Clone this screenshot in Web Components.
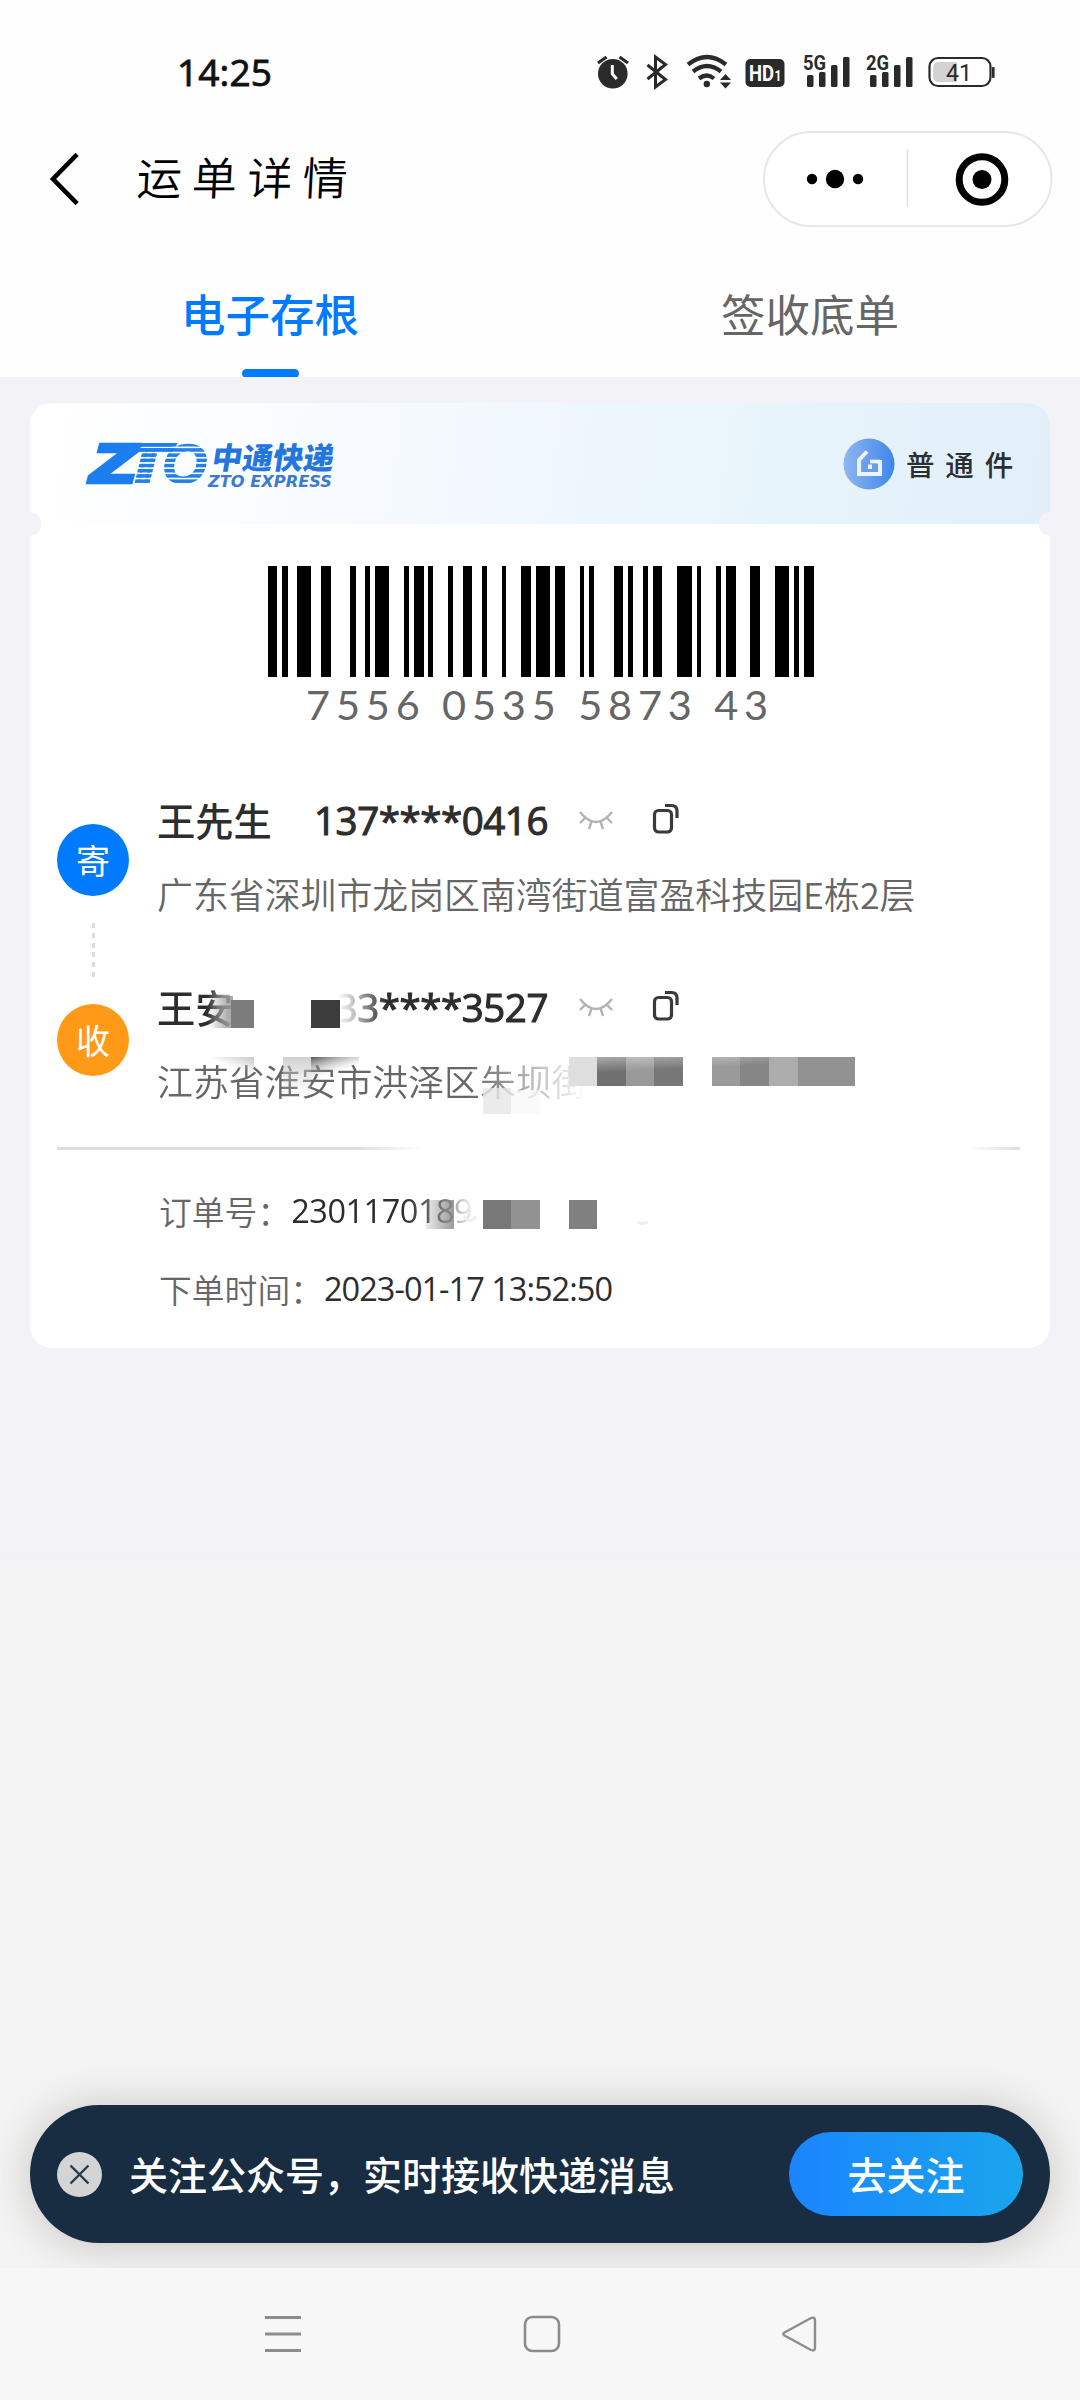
<!DOCTYPE html>
<html lang="zh-CN">
<head>
<meta charset="utf-8">
<title>运单详情</title>
<style>
html,body{margin:0;padding:0}
body{width:1080px;height:2400px;overflow:hidden;font-family:"Noto Sans CJK SC",sans-serif;background:#f3f3f3}
</style>
</head>
<body>
<waybill-page></waybill-page>
<script>
const define=(name,html,init)=>customElements.define(name,class extends HTMLElement{
  connectedCallback(){
    if(this.shadowRoot)return;
    const t=document.createElement('template');
    t.innerHTML=html;
    this.attachShadow({mode:'open'}).appendChild(t.content.cloneNode(true));
    if(init)init(this,this.shadowRoot);
  }
});

/* A single line of text whose letter spacing is tuned to a given width. */
define('fit-text',`<style>:host{display:block;white-space:nowrap;flex:none}span{display:inline-block;white-space:pre}</style><span></span>`,(el,root)=>{
  const s=root.querySelector('span');
  s.textContent=el.getAttribute('text');
  const w=+el.getAttribute('w');
  if(w){
    s.style.letterSpacing=(w-s.getBoundingClientRect().width)/s.textContent.length+'px';
    el.style.width=w+'px';
  }
});

define('status-bar',`<style>
:host{display:flex;height:116px;box-sizing:border-box;padding:48px 0 0 177px;align-items:flex-start}
fit-text{font:400 37px/48px "Open Sans","Noto Sans",sans-serif;color:#111;width:96px;-webkit-text-stroke:.9px #111}
svg{margin-left:317px;display:block}
</style>
<fit-text text="14:25" w="95"></fit-text>
<svg width="420" height="50" viewBox="590 48 420 50" fill="#2a2a2a">
 <circle cx="613.8" cy="73.7" r="14.8"/><path d="M599 63l8.5-6M620.500 57l8.500 6" stroke="#2a2a2a" stroke-width="3.200" fill="none"/>
 <path d="M613.300 65v9l4.500 5" stroke="#fff" stroke-width="3" fill="none"/>
 <path d="M648.500 65l18 14.500-10 7.500V57l10 7.500-18 14.500" fill="none" stroke="#2a2a2a" stroke-width="3"/>
 <g fill="none" stroke="#2a2a2a" stroke-width="4.200"><path d="M689 64.500q19-15 38 0"/><path d="M694 71.500q14-11 28 0"/><path d="M700 78.500q8-6 15 0"/></g>
 <circle cx="707.800" cy="84" r="3.200"/><path d="M721 80l5.500-6 5.500 6zM721 82.500l5.500 6 5.500-6z"/>
 <rect x="746.500" y="59" width="39" height="28" rx="5"/>
 <text x="750" y="81" font-family="Roboto" font-weight="700" font-size="22" textLength="25" lengthAdjust="spacingAndGlyphs" fill="#fff">HD</text>
 <text x="775.500" y="81" font-family="Roboto" font-weight="700" font-size="14" textLength="7" lengthAdjust="spacingAndGlyphs" fill="#fff">1</text>
 <text x="804" y="70" font-family="Roboto" font-weight="700" font-size="20" textLength="23" lengthAdjust="spacingAndGlyphs">5G</text>
 <rect x="808" y="75" width="6.500" height="12" rx="1.500"/><rect x="820" y="72" width="6.500" height="15" rx="1.500"/><rect x="832" y="65" width="6.500" height="22" rx="1.500"/><rect x="844" y="57" width="6.500" height="30" rx="1.500"/>
 <text x="867" y="70" font-family="Roboto" font-weight="700" font-size="20" textLength="23" lengthAdjust="spacingAndGlyphs">2G</text>
 <rect x="871" y="75" width="6.500" height="12" rx="1.500"/><rect x="883" y="72" width="6.500" height="15" rx="1.500"/><rect x="895" y="65" width="6.500" height="22" rx="1.500"/><rect x="907" y="57" width="6.500" height="30" rx="1.500"/>
 <rect x="930.500" y="58" width="61" height="28" rx="8.500" fill="#fff" stroke="#2a2a2a" stroke-width="2.200"/>
 <path d="M940 62h18v20h-18q-6 0-6-6v-8q0-6 6-6z" fill="#d3d3d3"/>
 <rect x="993" y="67" width="2.600" height="11" rx="1"/>
 <text x="947" y="80.500" font-family="Roboto" font-size="23" textLength="26" lengthAdjust="spacingAndGlyphs">41</text>
</svg>`);

define('title-bar',`<style>
:host{display:flex;height:126px;box-sizing:border-box;align-items:center;padding:0 27px 0 48px}
.back{flex:none;display:block}
fit-text{font:350 45px/60px "KaiTi","Noto Sans CJK SC",serif;color:#000;margin-left:55px;margin-top:-6px;transform:skewX(-3deg)}
.cap{margin-left:auto;flex:none;display:block}
</style>
<svg class="back" width="34" height="56" viewBox="48 151 34 56"><path d="M75.500 156L53 179l22.500 23" fill="none" stroke="#000" stroke-width="4.600" stroke-linecap="square"/></svg>
<fit-text text="运单详情" w="224"></fit-text>
<svg class="cap" width="291" height="98" viewBox="761 129.500 291 98"><rect x="763" y="131.500" width="287.500" height="94" rx="47" fill="#fff" stroke="#e7e7e7" stroke-width="2"/><path d="M906.500 149v57" stroke="#dedede" stroke-width="1.500"/>
<circle cx="811" cy="178.500" r="5.200"/><circle cx="834" cy="178.500" r="9.200"/><circle cx="857" cy="178.500" r="5.200"/>
<circle cx="981" cy="179" r="22.800" fill="none" stroke="#000" stroke-width="7"/><circle cx="981" cy="179" r="9.500"/></svg>`);

define('tab-item',`<style>
:host{display:flex;flex:1;flex-direction:column;align-items:center;justify-content:space-between;height:136px;color:#666;font:400 44.500px/60px "Noto Sans CJK SC",sans-serif}
:host([active]){color:#007aff;font-weight:500}
span{margin-top:41px}i{width:57px;height:9px;border-radius:4.500px}:host([active]) i{background:#007aff}
</style><span><slot></slot></span><i></i>`);
define('tab-strip',`<style>:host{display:flex;height:135px}</style><slot></slot>`);

define('zto-logo',`<style>:host{display:block}svg{display:block}</style>
<svg width="266" height="100" viewBox="82 414 266 100" fill="#1c7eee">
<defs><pattern id="s" width="8" height="5.200" y="443" patternUnits="userSpaceOnUse"><rect width="8" height="3.500" fill="#2380e8"/></pattern></defs>
<text x="90" y="482" font-family="Liberation Sans" font-weight="700" font-style="italic" font-size="54" textLength="45" lengthAdjust="spacingAndGlyphs" stroke="#1c7eee" stroke-width="4.500">Z</text>
<text x="124" y="482" font-family="Liberation Sans" font-weight="700" font-style="italic" font-size="54" textLength="42" lengthAdjust="spacingAndGlyphs" fill="url(#s)" stroke="url(#s)" stroke-width="4">T</text>
<text x="161" y="483" font-family="Liberation Sans" font-weight="700" font-style="italic" font-size="56" textLength="45" lengthAdjust="spacingAndGlyphs" fill="url(#s)" stroke="url(#s)" stroke-width="1.500">O</text>
<path d="M131 443h45.500l-1.500 3.400h-45zM130 448.200h43l-1 3.400h-43zM118 475h16l-5 9h-16z"/>
<text x="0" y="0" transform="translate(209.500 468.500) skewX(-9)" font-family="Noto Sans CJK SC" font-weight="900" font-size="30" textLength="122" lengthAdjust="spacingAndGlyphs" fill="#2276dc">中通快递</text>
<text x="207" y="486.500" font-family="DejaVu Sans" font-weight="700" font-style="italic" font-size="16" textLength="124" lengthAdjust="spacingAndGlyphs" fill="#3a7cc8">ZTO EXPRESS</text>
</svg>`);

define('ticket-header',`<style>
:host{display:flex;align-items:center;height:121px;box-sizing:border-box;padding:0 26px 0 53px;border-radius:22px 22px 0 0;background:linear-gradient(98deg,#fff 0%,#fafcfe 22%,#f0f7fe 50%,#e8f4fb 72%,#e2eff9 100%)}
.kind{margin-left:auto;display:flex;align-items:center;gap:11px}
fit-text{font:500 28.500px/40px "Noto Sans CJK SC",sans-serif;color:#2b2f33;margin-top:0}
svg{display:block}
</style><zto-logo></zto-logo>
<div class="kind"><svg width="52" height="52" viewBox="0 0 52 52"><defs><linearGradient id="g"><stop stop-color="#8fb6f0"/><stop offset="1" stop-color="#3f86ea"/></linearGradient></defs><circle cx="26" cy="26" r="25.500" fill="url(#g)"/>
<path d="M24 13.500L16 22v14h21V24H29" fill="none" stroke="#eaf4fd" stroke-width="4"/><rect x="19.500" y="24" width="15" height="10" fill="#6b9eea"/><path d="M27 23.500h10" stroke="#eaf4fd" stroke-width="3.600"/><rect x="25" y="26.500" width="4" height="4.500" fill="#eaf4fd"/></svg>
<fit-text text="普通件" w="118"></fit-text></div>`);

define('bar-code',`<style>:host{display:flex;flex-direction:column;align-items:flex-start;padding:42px 0 0 238px}svg{display:block}
fit-text{font:400 41.500px/50px Lato,sans-serif;color:#666;margin:2px 0 0 38px}</style>
<svg width="547" height="111" shape-rendering="geometricPrecision"></svg><fit-text text="7556 0535 5873 43" w="468"></fit-text>`,(el,root)=>{
  const a=[54,81,96,114,141,183,213,243,300,318,345,360,375,417,462,477,492,522,534,549,594,609,639,666,696,711,756,768,813,843,858,900];
  const b=[45,75,120,132,147,162,222,249,264,279,309,324,339,366,411,456,471,483,528,543,558,588,630,660,705,747,762,777,792,822];
  const xs=a.map(v=>v/3-18).concat(b.map(v=>v/3+272));
  let d='';
  for(let i=0;i<xs.length;i+=2)d+='M'+xs[i]+' 0H'+xs[i+1]+'V111H'+xs[i]+'z';
  const p=document.createElementNS('http://www.w3.org/2000/svg','path');
  p.setAttribute('d',d);root.querySelector('svg').appendChild(p);
});

define('round-badge',`<style>:host{display:flex;align-items:center;justify-content:center;width:72px;height:72px;border-radius:50%;color:#fff;font:400 34px/40px "Noto Sans CJK SC",sans-serif;flex:none}span{margin-top:-1px}</style><span><slot></slot></span>`);

define('contact-row',`<style>
:host{display:block;height:129px}
.top{display:flex;align-items:flex-start;height:80px}
.name{font:500 38.300px/54px "Noto Sans CJK SC",sans-serif;color:#2d2d2d;width:157px}
.tel{color:#2d2d2d}
.tel fit-text{font:400 38.500px/54px "Open Sans",sans-serif;-webkit-text-stroke:1.1px #2d2d2d}
.addr{font:350 35.900px/48px "Noto Sans CJK SC",sans-serif;color:#666;margin-top:-4px}
.eye{margin:16px 0 0 30px}.copy{margin:9px 0 0 37px}
svg{display:block;flex:none}
:host([masked]) .name{-webkit-mask-image:linear-gradient(90deg,#000 50px,transparent 84px);mask-image:linear-gradient(90deg,#000 50px,transparent 84px)}
:host([masked]) .tel{-webkit-mask-image:linear-gradient(90deg,transparent 24px,#0005 42px,#000 72px);mask-image:linear-gradient(90deg,transparent 24px,#0005 42px,#000 72px)}
:host([masked]) .addr{-webkit-mask-image:linear-gradient(90deg,#000 310px,#0009 360px,transparent 430px);mask-image:linear-gradient(90deg,#000 310px,#0009 360px,transparent 430px)}
</style>
<div class="top"><div class="name"></div><div class="tel"></div>
<svg class="eye" width="36" height="22" viewBox="0 0 36 22" fill="none" stroke="#b3b3b3" stroke-width="2.400"><path d="M2 3Q18 23 34 3M7 9l-5 5M29 9l5 5M13.500 12.500L11 20M22.500 12.500L25 20"/></svg>
<svg class="copy" width="30" height="32" viewBox="0 0 30 32" fill="none" stroke="#3a3a3a" stroke-width="3.200"><rect x="3.500" y="8.500" width="17" height="21.500" rx="4"/><path d="M14 3.500h6.500q5.500 0 5.500 5.500v7"/></svg></div>
<div class="addr"></div>`,(el,root)=>{
  root.querySelector('.name').textContent=el.getAttribute('name');
  root.querySelector('.tel').innerHTML='<fit-text w="234" text="'+el.getAttribute('tel')+'"></fit-text>';
  root.querySelector('.addr').textContent=el.getAttribute('addr');
});

define('contact-list',`<style>
:host{display:flex;padding:64px 0 0 27px}
.rail{display:flex;flex-direction:column;align-items:center;width:72px;padding-top:31px;margin-right:28px}
i{width:3px;height:55px;margin:27px 0 26px;background:repeating-linear-gradient(#dcdcdc 0 5px,transparent 5px 9.800px)}
.rows{display:flex;flex-direction:column;gap:58px}
</style><div class="rail"><round-badge style="background:#007aff">寄</round-badge><i></i><round-badge style="background:#ff9a18">收</round-badge></div>
<div class="rows">
<contact-row name="王先生" tel="137****0416" addr="广东省深圳市龙岗区南湾街道富盈科技园E栋2层"></contact-row>
<contact-row masked name="王安" tel="133****3527" addr="江苏省淮安市洪泽区朱坝街道"></contact-row></div>`);

define('info-row',`<style>:host{display:flex;align-items:center;height:78px;padding-left:129px;color:#666;font:350 32.800px/44px "Noto Sans CJK SC",sans-serif}
fit-text{font-family:"Open Sans";font-weight:400;color:#2d2d2d;font-size:32.500px;margin-left:1px}
:host([masked]) fit-text{-webkit-mask-image:linear-gradient(90deg,#000 110px,#000a 150px,transparent 184px);mask-image:linear-gradient(90deg,#000 110px,#000a 150px,transparent 184px)}
</style><slot></slot>`,(el,root)=>{
  const f=document.createElement('fit-text');
  f.setAttribute('text',el.getAttribute('value'));f.setAttribute('w',el.getAttribute('w'));
  root.appendChild(f);
});

/* Redaction blocks laid over the recipient's details. */
define('redaction-layer',`<style>:host{position:absolute;left:0;top:0;pointer-events:none}svg{display:block}</style>
<svg width="1020" height="945" viewBox="30 403 1020 945"><defs>
<linearGradient id="h"><stop stop-color="#777" stop-opacity="0"/><stop offset=".8" stop-color="#777"/></linearGradient>
<linearGradient id="v" x2="0" y2="1"><stop stop-color="#bbb" stop-opacity=".7"/><stop offset="1" stop-color="#ddd" stop-opacity="0"/></linearGradient>
<linearGradient id="u" x1="0" y1="1" x2="1" y2="0"><stop offset=".4" stop-color="#bbb" stop-opacity="0"/><stop offset="1" stop-color="#bbb" stop-opacity=".8"/></linearGradient>
<linearGradient id="w" x2=".6" y2="1"><stop stop-color="#555"/><stop offset=".7" stop-color="#bbb" stop-opacity="0"/></linearGradient>
<linearGradient id="x" x2="1" y2="0"><stop stop-color="#777" stop-opacity=".15"/><stop offset="1" stop-color="#777" stop-opacity=".75"/></linearGradient>
<linearGradient id="t" x2=".3" y2="1"><stop stop-color="#fff" stop-opacity=".4"/><stop offset=".5" stop-color="#fff" stop-opacity="0"/></linearGradient></defs>
<rect x="208" y="996" width="25" height="32" fill="url(#h)" opacity=".6"/><rect x="231" y="1000" width="23" height="28" fill="#7c7c7c"/><rect x="311" y="1000" width="29" height="28" fill="#3c3c3c"/>
<rect x="212" y="1057" width="42" height="16" fill="url(#u)"/><rect x="283" y="1057" width="28" height="43" fill="url(#v)"/><rect x="311" y="1057" width="48" height="24" fill="url(#w)"/>
<rect x="483" y="1088" width="28" height="26" fill="#e6e6e6" opacity=".8"/><rect x="511" y="1090" width="29" height="24" fill="#f8f8f8" opacity=".7"/>
<g><rect x="569" y="1057" width="28" height="29" fill="#dedede"/><rect x="597" y="1057" width="29" height="29" fill="#707070"/><rect x="626" y="1057" width="28" height="29" fill="#999"/><rect x="654" y="1057" width="29" height="29" fill="#777"/>
<rect x="712" y="1057" width="28" height="29" fill="#9a9a9a"/><rect x="740" y="1057" width="29" height="29" fill="#868686"/><rect x="769" y="1057" width="29" height="29" fill="#adadad"/><rect x="798" y="1057" width="57" height="29" fill="#929292"/><path d="M597 1057h86v29h-86zM712 1057h57v29h-57z" fill="url(#t)"/></g>
<rect x="426" y="1200" width="28" height="29" fill="url(#x)"/><rect x="483" y="1200" width="28" height="29" fill="#787878"/><rect x="511" y="1200" width="29" height="29" fill="#929292"/><rect x="569" y="1200" width="28" height="29" fill="#808080"/>
<path d="M464 1216q6 9 12 0M637 1222q6 3 11 0" stroke="#eee" stroke-width="3" fill="none"/></svg>`);

define('waybill-card',`<style>
:host{display:block;position:relative;width:1020px;height:945px;margin:26px 30px 0;background:#fff;border-radius:22px}
.n{position:absolute;top:109px;width:11px;height:24px;background:#f2f2f7}.l{left:0;border-radius:0 12px 12px 0}.r{right:0;border-radius:12px 0 0 12px}
hr{margin:38px 30px 0 27px;height:3px;border:0;background:linear-gradient(90deg,#dedede 300px,transparent 366px,transparent 910px,#dedede)}
.info{padding-top:22px}
</style><ticket-header></ticket-header><bar-code></bar-code><contact-list></contact-list><hr>
<div class="info"><info-row masked value="2301170189" w="181">订单号：</info-row><info-row value="2023-01-17 13:52:50" w="288">下单时间：</info-row></div>
<i class="n l"></i><i class="n r"></i><redaction-layer></redaction-layer>`);

define('follow-bar',`<style>
:host{display:flex;align-items:center;height:138px;margin:0 30px;padding:0 27px;box-sizing:border-box;border-radius:69px;background:#182d42;box-shadow:0 2px 42px rgba(60,45,35,.24)}
svg{display:block;flex:none}
fit-text{font:500 39px/56px "Noto Sans CJK SC",sans-serif;color:#fff;margin:-2px 0 0 27px}
button{margin:0 0 0 auto;width:234px;height:84px;border:0;border-radius:42px;padding:0 0 2px;color:#fff;font:500 39px/56px "Noto Sans CJK SC",sans-serif;background:linear-gradient(90deg,#1a85ff,#1aa5ec)}
</style><svg width="45" height="45" viewBox="0 0 45 45"><circle cx="22.500" cy="22.500" r="22.500" fill="#d4d4d4"/><path d="M13.500 13.500l18 18M31.500 13.500l-18 18" stroke="#2a3a49" stroke-width="2.400"/></svg>
<fit-text text="关注公众号，实时接收快递消息" w="546"></fit-text><button>去关注</button>`);

define('system-nav',`<style>:host{display:flex;height:132px;background:#f7f7f7;padding:0 256px 0 259px;justify-content:space-between;align-items:center}svg{display:block}</style>
<svg width="48" height="48" viewBox="0 0 48 48" stroke="#8c8c8c" stroke-width="3"><path d="M6 7.500h36M6 24h36M6 40.500h36"/></svg>
<svg width="48" height="48" viewBox="0 0 48 48" fill="none" stroke="#8c8c8c" stroke-width="2.600"><rect x="7" y="7" width="34" height="34" rx="7.500"/></svg>
<svg width="48" height="48" viewBox="0 0 48 48" fill="none" stroke="#8c8c8c" stroke-width="2.400"><path d="M8.500 22.500L35 8q4-1.500 4 2.500v27q0 4-4 2.500L8.500 25.500q-2.500-1.500 0-3z"/></svg>`);

define('waybill-page',`<style>
:host{display:flex;flex-direction:column;width:1080px;height:2400px;overflow:hidden}
header{background:#fefefe;height:377px;flex:none}
main{flex:1;background:linear-gradient(#f2f2f7 0,#f2f2f7 1170px,#f3f3f3 1200px);display:flex;flex-direction:column;overflow:hidden}
follow-bar{margin-top:auto;margin-bottom:25px}
</style>
<header><status-bar></status-bar><title-bar></title-bar><tab-strip><tab-item active>电子存根</tab-item><tab-item>签收底单</tab-item></tab-strip></header>
<main><waybill-card></waybill-card><follow-bar></follow-bar></main><system-nav></system-nav>`);
</script>
</body>
</html>
